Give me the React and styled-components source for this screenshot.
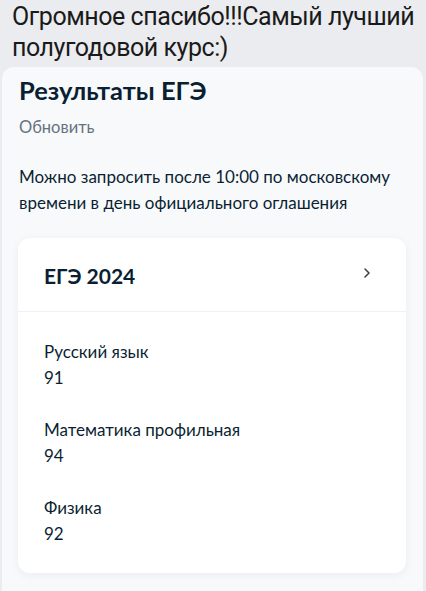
import React from "react";
import styled, { createGlobalStyle } from "styled-components";

const Global = createGlobalStyle`
  html, body { margin: 0; padding: 0; background: #ebecef; }
  body { width: 426px; height: 591px; overflow: hidden; }
`;

const Page = styled.div`
  width: 426px;
  height: 591px;
  background: #ebecef;
  overflow: hidden;
  display: flex;
  flex-direction: column;
`;

const Message = styled.div`
  font-family: "Roboto", "Liberation Sans", sans-serif;
  font-size: 25px;
  line-height: 31px;
  letter-spacing: -0.45px;
  color: #1a1a1a;
  padding: 1px 0 0 12px;
  white-space: nowrap;
  height: 58px;
`;

const Panel = styled.div`
  margin: 8px 3px 0 2px;
  background: #f8f9fb;
  border-radius: 12px 12px 0 0;
  padding: 7px 16px 0 16px;
  flex: 1;
  font-family: "Lato", "Noto Sans", sans-serif;
  color: #0b1f33;
`;

const Title = styled.h1`
  margin: 0;
  font-size: 25.5px;
  font-weight: 700;
  line-height: 32px;
  color: #0b1f33;
  padding-left: 1px;
`;

const Refresh = styled.div`
  margin-top: 11px;
  font-size: 16.5px;
  color: #66727f;
  line-height: 20px;
  padding-left: 1px;
`;

const Note = styled.p`
  margin: 27px 0 0;
  font-size: 17px;
  line-height: 26px;
  color: #0b1f33;
  padding-left: 1px;
  white-space: nowrap;
`;

const Card = styled.div`
  margin: 22px 0 0 0;
  width: 388px;
  background: #ffffff;
  border-radius: 12px;
  box-shadow: 0 2px 10px rgba(20, 40, 80, 0.06);
`;

const CardHead = styled.div`
  display: flex;
  align-items: center;
  justify-content: space-between;
  height: 73px;
  padding: 0 34px 0 26px;
  border-bottom: 1px solid #eef1f5;
`;

const CardTitle = styled.div`
  font-size: 21px;
  font-weight: 700;
  color: #0b1f33;
  padding-top: 2px;
`;

const Chevron = styled.svg`
  width: 10px;
  height: 12px;
  margin-top: -3px;
`;

const List = styled.div`
  display: flex;
  flex-direction: column;
  gap: 26px;
  padding: 27px 26px 26px;
`;

const Item = styled.div`
  display: flex;
  flex-direction: column;
`;

const Subject = styled.div`
  font-size: 17px;
  line-height: 26px;
  color: #0b1f33;
`;

const Score = styled.div`
  font-size: 17px;
  line-height: 26px;
  color: #0b1f33;
`;

const results = [
  { subject: "Русский язык", score: 91 },
  { subject: "Математика профильная", score: 94 },
  { subject: "Физика", score: 92 },
];

export default function App() {
  return (
    <Page>
      <Global />
      <Message>
        Огромное спасибо!!!Самый лучший
        <br />
        полугодовой курс:)
      </Message>
      <Panel>
        <Title>Результаты ЕГЭ</Title>
        <Refresh>Обновить</Refresh>
        <Note>
          Можно запросить после 10:00 по московскому
          <br />
          времени в день официального оглашения
        </Note>
        <Card>
          <CardHead>
            <CardTitle>ЕГЭ 2024</CardTitle>
            <Chevron viewBox="0 0 10 12">
              <path d="M3 2 L7 6 L3 10" fill="none" stroke="#3a4450" strokeWidth="1.6" strokeLinecap="round" strokeLinejoin="round" />
            </Chevron>
          </CardHead>
          <List>
            {results.map((r) => (
              <Item key={r.subject}>
                <Subject>{r.subject}</Subject>
                <Score>{r.score}</Score>
              </Item>
            ))}
          </List>
        </Card>
      </Panel>
    </Page>
  );
}
